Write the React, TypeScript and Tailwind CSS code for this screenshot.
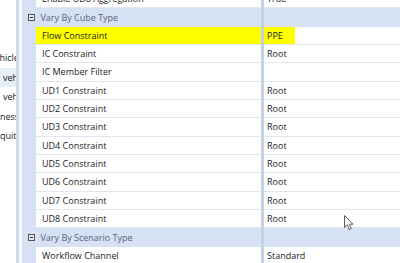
import type { FC } from 'react';

type GridRow =
    | { kind: 'category'; label: string }
    | { kind: 'property'; name: string; value: string; highlight?: boolean };

const rows: GridRow[] = [
    { kind: 'property', name: 'Enable UD8 Aggregation', value: 'True' },
    { kind: 'category', label: 'Vary By Cube Type' },
    { kind: 'property', name: 'Flow Constraint', value: 'PPE', highlight: true },
    { kind: 'property', name: 'IC Constraint', value: 'Root' },
    { kind: 'property', name: 'IC Member Filter', value: '' },
    { kind: 'property', name: 'UD1 Constraint', value: 'Root' },
    { kind: 'property', name: 'UD2 Constraint', value: 'Root' },
    { kind: 'property', name: 'UD3 Constraint', value: 'Root' },
    { kind: 'property', name: 'UD4 Constraint', value: 'Root' },
    { kind: 'property', name: 'UD5 Constraint', value: 'Root' },
    { kind: 'property', name: 'UD6 Constraint', value: 'Root' },
    { kind: 'property', name: 'UD7 Constraint', value: 'Root' },
    { kind: 'property', name: 'UD8 Constraint', value: 'Root' },
    { kind: 'category', label: 'Vary By Scenario Type' },
    { kind: 'property', name: 'Workflow Channel', value: 'Standard' },
];

// tree on the left is scrolled, only the tail of each label shows
const treeItems = [
    { label: 'Vehicle', className: 'ml-[-11px]', selected: false },
    { label: 'vehicles', className: 'ml-[3px]', selected: true },
    { label: 'vehicles', className: 'ml-[3px]', selected: false },
    { label: 'Business', className: 'ml-[-18px]', selected: false },
    { label: 'Equity', className: 'ml-[-5px]', selected: false },
];

const CollapseIcon: FC = () => (
    <svg width="7" height="7" viewBox="0 0 7 7">
        <rect x="0.5" y="0.5" width="6" height="6" fill="#e9e9e9" stroke="#555" />
        <line x1="2" y1="3.5" x2="5" y2="3.5" stroke="#333" />
    </svg>
);

const CategoryRow: FC<{ label: string }> = ({ label }) => (
    <div className="flex h-[18.35px] shrink-0 bg-[#d6e1f3]">
        <div className="flex w-[14px] shrink-0 items-center justify-end pr-[1px]">
            <CollapseIcon />
        </div>
        <div className="flex w-[225px] shrink-0 items-center pl-[4.5px] whitespace-nowrap text-[#56657f]">
            {label}
        </div>
        <div className="w-[3px] shrink-0 bg-[#c4d2e8]" />
        <div className="flex-1" />
    </div>
);

const PropertyRow: FC<{ name: string; value: string; highlight?: boolean }> = ({ name, value, highlight }) => (
    <div className="flex h-[18.35px] shrink-0">
        <div className="w-[14px] shrink-0 bg-[#d6e1f3]" />
        <div
            className={`flex w-[225px] shrink-0 items-center border-b border-[#dfe7f3] pl-[6px] whitespace-nowrap ${
                highlight ? 'bg-[#ffff00]' : ''
            }`}
        >
            {name}
        </div>
        <div className="w-[3px] shrink-0 bg-[#c4d2e8]" />
        <div className="flex flex-1 items-stretch border-b border-[#dfe7f3] whitespace-nowrap">
            {highlight ? (
                <span className="flex w-[31px] items-center bg-[#ffff00] pl-[3px]">{value}</span>
            ) : (
                <span className="flex items-center pl-[3px]">{value}</span>
            )}
        </div>
    </div>
);

const App: FC = () => {
    return (
        <div className="relative flex h-[263px] w-[400px] overflow-hidden bg-white font-['Open_Sans',sans-serif] text-[9px] text-[#1b1b1b]">
            <div className="w-[16px] shrink-0 overflow-hidden pt-[48px]">
                {treeItems.map((item, i) => (
                    <div
                        key={i}
                        className={`flex h-[19.5px] items-center whitespace-nowrap ${item.selected ? 'bg-[#e6eef9]' : ''}`}
                    >
                        <span className={item.className}>{item.label}</span>
                    </div>
                ))}
            </div>
            <div className="w-[3px] shrink-0 bg-[#cfdaec]" />
            <div className="w-[3px] shrink-0 bg-[#f7f9fc]" />

            <div className="mt-[-10.1px] flex min-w-0 flex-1 flex-col">
                {rows.map((row, i) =>
                    row.kind === 'category' ? (
                        <CategoryRow key={i} label={row.label} />
                    ) : (
                        <PropertyRow key={i} name={row.name} value={row.value} highlight={row.highlight} />
                    )
                )}
            </div>

            {/* mouse pointer */}
            <svg className="absolute left-[344px] top-[215px]" width="11" height="16" viewBox="0 0 11 16">
                <path
                    d="M0.5 0.5 L0.5 12.5 L3.3 9.8 L5.3 14.5 L7.2 13.7 L5.3 9.2 L9 9.2 Z"
                    fill="#fff"
                    stroke="#5a5a5a"
                    strokeLinejoin="round"
                />
            </svg>
        </div>
    );
};

export default App;
